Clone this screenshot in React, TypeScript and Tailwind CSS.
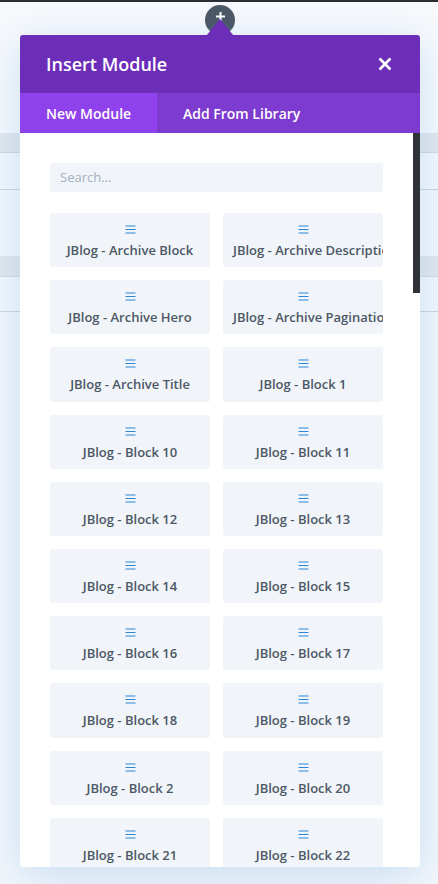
import React from "react";

const modules = [
  "JBlog - Archive Block",
  "JBlog - Archive Description",
  "JBlog - Archive Hero",
  "JBlog - Archive Pagination",
  "JBlog - Archive Title",
  "JBlog - Block 1",
  "JBlog - Block 10",
  "JBlog - Block 11",
  "JBlog - Block 12",
  "JBlog - Block 13",
  "JBlog - Block 14",
  "JBlog - Block 15",
  "JBlog - Block 16",
  "JBlog - Block 17",
  "JBlog - Block 18",
  "JBlog - Block 19",
  "JBlog - Block 2",
  "JBlog - Block 20",
  "JBlog - Block 21",
  "JBlog - Block 22",
  "JBlog - Block 23",
  "JBlog - Block 24",
];

function ModuleIcon() {
  return (
    <svg width="11" height="9" viewBox="0 0 11 9" className="shrink-0">
      <g stroke="#2b87da" strokeWidth="1.2">
        <line x1="0.5" y1="1" x2="10.5" y2="1" />
        <line x1="0.5" y1="4.5" x2="10.5" y2="4.5" />
        <line x1="0.5" y1="8" x2="10.5" y2="8" />
      </g>
    </svg>
  );
}

function ModuleCard({ label }: { label: string }) {
  return (
    <div className="h-[54.2px] bg-[#f1f5f9] rounded-[3px] px-[10px] pt-[12px] flex flex-col items-center overflow-hidden">
      <ModuleIcon />
      <div className="mt-[7px] w-full text-center whitespace-nowrap text-[13px] font-semibold text-[#4c5866] leading-[18px]">
        {label}
      </div>
    </div>
  );
}

export default function App() {
  return (
    <div className="relative w-[438px] h-[884px] overflow-hidden bg-white font-['Open_Sans',sans-serif]">
      {/* page behind the modal */}
      <div className="flex flex-col h-full">
        <div className="h-[2px] bg-[#2a2d31]" />
        <div className="h-[131px] bg-[#f7f9fc]" />
        <div className="h-[20px] bg-[#e3e7ec] border-b border-[#d3d8de]" />
        <div className="h-[37px] bg-[#f4f8fc] border-b border-[#cfd4da]" />
        <div className="h-[66px] bg-[#f4f8fc]" />
        <div className="h-[21px] bg-[#e3e7ec] border-b border-[#d3d8de]" />
        <div className="h-[35px] bg-[#f4f8fc] border-b border-[#cfd4da]" />
        <div className="flex-1 bg-[#f3f6fa]" />
      </div>

      {/* add button */}
      <div className="absolute left-[205px] top-[5px] w-[30px] h-[30px] rounded-full bg-[#4c5866] flex items-start justify-center pt-[7px]">
        <svg width="9" height="9" viewBox="0 0 9 9">
          <path d="M4.5 0v9M0 4.5h9" stroke="white" strokeWidth="2" />
        </svg>
      </div>

      {/* modal */}
      <div className="absolute left-[20px] top-[35px] w-[400px] h-[832px] flex flex-col bg-white rounded-[3px] shadow-[0_8px_40px_rgba(43,135,218,0.22)]">
        <svg className="absolute left-[186px] top-[-16px]" width="28" height="17" viewBox="0 0 28 17">
          <path d="M14 0L28 17H0Z" fill="#6c2eb9" />
        </svg>
        <div className="h-[58px] bg-[#6c2eb9] rounded-t-[3px] px-[26px] flex items-center justify-between">
          <span className="text-[18px] font-semibold text-white">Insert Module</span>
          <svg width="14" height="14" viewBox="0 0 14 14" className="mr-[2px]">
            <path d="M1.5 1.5l11 11M12.5 1.5l-11 11" stroke="white" strokeWidth="2.6" />
          </svg>
        </div>
        <div className="h-[40px] bg-[#7e3bd0] flex text-[14px] font-semibold text-white whitespace-nowrap">
          <div className="w-[137px] shrink-0 bg-[#8f42ec] pl-[26px] flex items-center">New Module</div>
          <div className="px-[26px] flex items-center">Add From Library</div>
        </div>
        <div className="flex-1 flex min-h-0">
          <div className="flex-1 min-w-0 overflow-hidden px-[30px] pt-[30px]">
            <div className="h-[29px] bg-[#f1f5f9] rounded-[3px] px-[10px] flex items-center text-[13px] text-[#a2b0c1]">
              Search...
            </div>
            <div className="mt-[21px] grid grid-cols-2 gap-x-[13px] gap-y-[13px]">
              {modules.map((m) => (
                <ModuleCard key={m} label={m} />
              ))}
            </div>
          </div>
          <div className="w-[7px] flex flex-col">
            <div className="h-[160px] bg-[#2f3337]" />
          </div>
        </div>
      </div>
    </div>
  );
}
